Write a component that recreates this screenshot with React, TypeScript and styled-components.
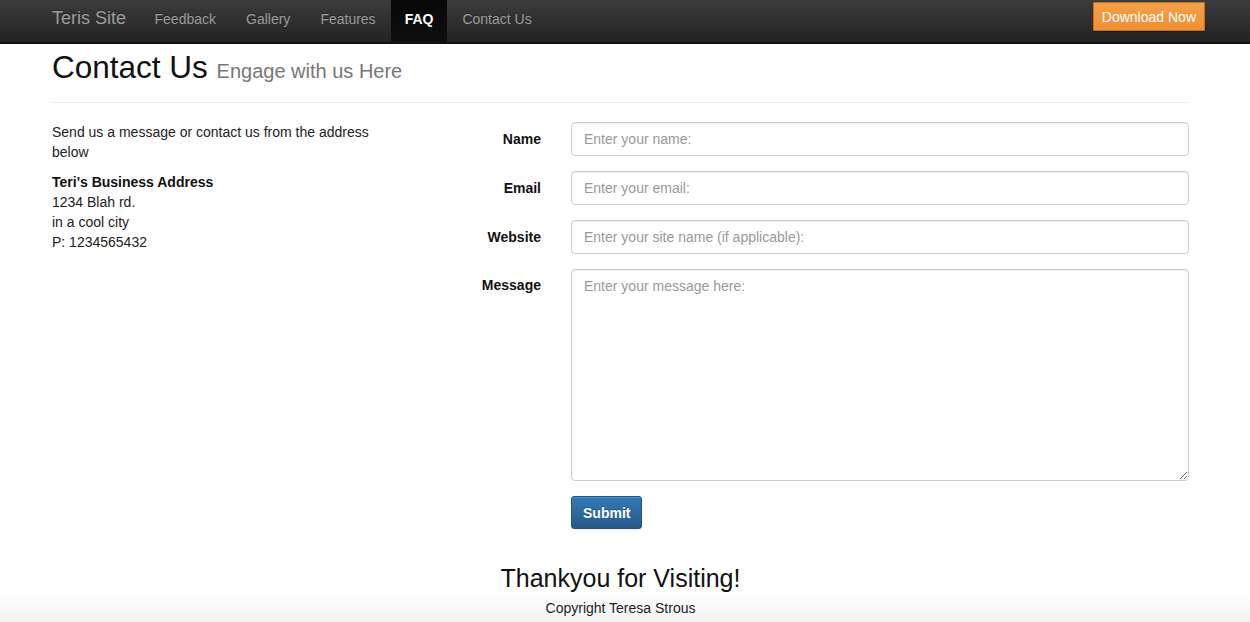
import React from 'react'
import styled, { createGlobalStyle } from 'styled-components';

const GlobalStyle = createGlobalStyle`
html, body {
    margin: 0;
    padding: 0;
    background: #fff;
}
body {
    font-family: "Liberation Sans", Arial, Helvetica, sans-serif;
    font-size: 14px;
    line-height: 20px;
    color: #333;
}
* {
    box-sizing: border-box;
}
`;

const navLinks = ['Feedback', 'Gallery', 'Features', 'FAQ', 'Contact Us'];
const activeLink = 'FAQ';

const fields = [
    { id: 'name', label: 'Name', placeholder: 'Enter your name:' },
    { id: 'email', label: 'Email', placeholder: 'Enter your email:' },
    { id: 'website', label: 'Website', placeholder: 'Enter your site name (if applicable):' },
];

const App: React.FC = () => {
    return (
        <Page>
            <GlobalStyle />
            <NavBar>
                <Brand href="#">Teris Site</Brand>
                <NavList>
                    {navLinks.map((link) => (
                        <NavItem key={link} active={link === activeLink}>
                            <a href="#">{link}</a>
                        </NavItem>
                    ))}
                </NavList>
                <DownloadButton type="button">Download Now</DownloadButton>
            </NavBar>

            <Main>
                <PageHeader>
                    <h1>
                        Contact Us <small>Engage with us Here</small>
                    </h1>
                </PageHeader>

                <ContentRow>
                    <Address>
                        <p>Send us a message or contact us from the address below</p>
                        <address>
                            <strong>Teri's Business Address</strong>
                            <br />
                            1234 Blah rd.
                            <br />
                            in a cool city
                            <br />
                            P: 1234565432
                        </address>
                    </Address>

                    <ContactForm onSubmit={(e) => e.preventDefault()}>
                        {fields.map((field) => (
                            <FormRow key={field.id}>
                                <Label htmlFor={field.id}>{field.label}</Label>
                                <Input id={field.id} type="text" placeholder={field.placeholder} />
                            </FormRow>
                        ))}
                        <FormRow top>
                            <Label htmlFor="message" top>Message</Label>
                            <TextArea id="message" placeholder="Enter your message here:" />
                        </FormRow>
                        <FormRow>
                            <span />
                            <div>
                                <SubmitButton type="submit">Submit</SubmitButton>
                            </div>
                        </FormRow>
                    </ContactForm>
                </ContentRow>

                <Thanks>Thankyou for Visiting!</Thanks>
            </Main>

            <Footer>
                <p>Copyright Teresa Strous</p>
            </Footer>
        </Page>
    )
}

const Page = styled.div`
min-height: 622px;
display: flex;
flex-direction: column;
`;

const NavBar = styled.nav`
height: 44px;
display: flex;
align-items: flex-start;
padding: 0 45px 0 52px;
background-image: linear-gradient(to bottom, #3c3c3c 0%, #222 100%);
border-bottom: 2px solid #111;
`;

const Brand = styled.a`
font-size: 18px;
line-height: 20px;
padding: 8px 13.5px 14px 0;
color: #9d9d9d;
text-decoration: none;
text-shadow: 0 -1px 0 rgba(0, 0, 0, .25);
`;

const NavList = styled.ul`
display: flex;
list-style: none;
margin: 0;
padding: 0;
`;

const NavItem = styled.li<{ active?: boolean }>`
a {
    display: block;
    padding: 9px ${(p) => (p.active ? '14px' : '15px')} 13px;
    font-size: 14px;
    line-height: 20px;
    text-decoration: none;
    color: ${(p) => (p.active ? '#fff' : '#9d9d9d')};
    font-weight: ${(p) => (p.active ? 'bold' : 'normal')};
    background: ${(p) => (p.active ? 'linear-gradient(to bottom, #080808 0%, #0f0f0f 100%)' : 'transparent')};
    text-shadow: 0 -1px 0 rgba(0, 0, 0, .25);
}
`;

const DownloadButton = styled.button`
margin: 2px 0 0 auto;
height: 29px;
padding: 0 8px;
font-family: inherit;
font-size: 14px;
color: #fff;
background-image: linear-gradient(to bottom, #f4a04c 0%, #ee8f31 100%);
border: 1px solid #c86f1b;
border-radius: 1px;
box-shadow: 0 1px 1px rgba(0, 0, 0, .4);
cursor: pointer;
`;

const Main = styled.main`
padding: 0 61px 0 52px;
`;

const PageHeader = styled.div`
margin-top: 6px;
padding-bottom: 14px;
border-bottom: 1px solid #eee;
h1 {
    margin: 0;
    font-size: 31.5px;
    line-height: 34px;
    font-weight: normal;
    color: #111;
}
small {
    font-size: 20px;
    color: #777;
}
`;

const ContentRow = styled.div`
display: grid;
grid-template-columns: 389px 1fr;
padding-top: 19px;
`;

const Address = styled.div`
max-width: 340px;
color: #222;
p {
    margin: 0 0 10px;
}
address {
    font-style: normal;
}
strong {
    color: #111;
}
`;

const ContactForm = styled.form`
display: flex;
flex-direction: column;
gap: 15px;
padding-top: 0;
`;

const FormRow = styled.div<{ top?: boolean }>`
display: grid;
grid-template-columns: 100px 1fr;
column-gap: 30px;
align-items: ${(p) => (p.top ? 'start' : 'center')};
`;

const Label = styled.label<{ top?: boolean }>`
text-align: right;
font-weight: bold;
color: #111;
padding-top: ${(p) => (p.top ? '6px' : '0')};
`;

const fieldStyles = `
width: 100%;
font-family: "Liberation Sans", Arial, Helvetica, sans-serif;
font-size: 14px;
line-height: 20px;
color: #555;
padding: 6px 12px;
background: #fff;
border: 1px solid #ccc;
border-radius: 4px;
box-shadow: inset 0 1px 1px rgba(0, 0, 0, .075);
outline: none;
&::placeholder {
    color: #999;
}
`;

const Input = styled.input`
${fieldStyles}
height: 34px;
`;

const TextArea = styled.textarea`
${fieldStyles}
height: 212px;
resize: vertical;
display: block;
`;

const SubmitButton = styled.button`
height: 33px;
padding: 0 11px;
font-family: inherit;
font-size: 14px;
font-weight: bold;
color: #fff;
background-image: linear-gradient(to bottom, #337ab7 0%, #265a88 100%);
border: 1px solid #245580;
border-radius: 3px;
text-shadow: 0 -1px 0 rgba(0, 0, 0, .2);
box-shadow: inset 0 1px 0 rgba(255, 255, 255, .15), 0 1px 1px rgba(0, 0, 0, .075);
cursor: pointer;
`;

const Thanks = styled.h2`
margin: 36px 0 0;
text-align: center;
font-size: 25px;
line-height: 27px;
font-weight: normal;
color: #111;
`;

const Footer = styled.footer`
flex: 1;
padding: 6px 61px 0 52px;
background-image: linear-gradient(to bottom, #fff 0%, #f3f3f3 100%);
p {
    margin: 0;
    text-align: center;
    color: #222;
}
`;

export default App
